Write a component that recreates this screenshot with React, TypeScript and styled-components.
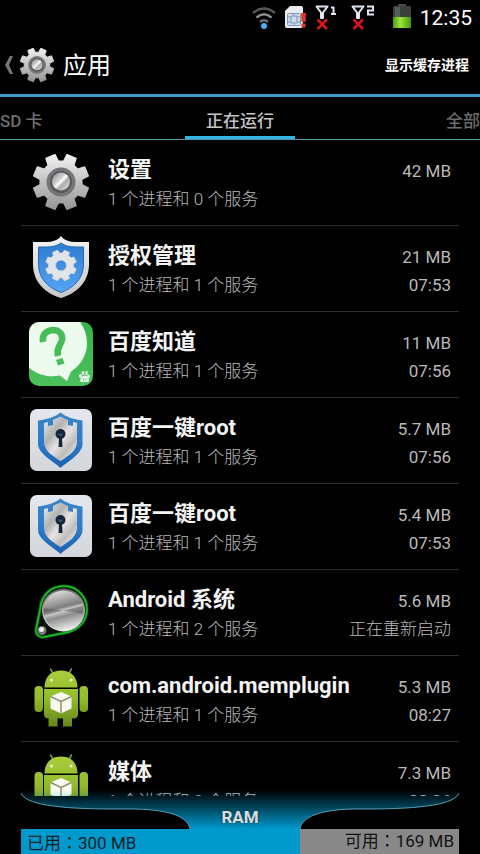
import React, { useId, useState } from "react";
import styled, { createGlobalStyle, css } from "styled-components";

const GlobalStyle = createGlobalStyle`
  *, *::before, *::after { box-sizing: border-box; }
  body {
    margin: 0;
    background: #000;
    color: #fff;
    font-family: Roboto, "Noto Sans CJK SC", sans-serif;
  }
  button {
    margin: 0;
    padding: 0;
    border: 0;
    background: none;
    color: inherit;
    font: inherit;
    cursor: pointer;
  }
`;

const Screen = styled.div`
  display: flex;
  flex-direction: column;
  height: 100vh;
  overflow: hidden;
  background: #000;
`;

/* ---------- status bar ---------- */

const StatusBar = styled.div`
  display: flex;
  flex: none;
  justify-content: flex-end;
  align-items: center;
  height: 34px;
  padding-right: 8px;
`;

const Signals = styled.div`
  display: flex;
  align-items: center;
  gap: 8px;
  margin-right: 17px;
`;

const SecondSignal = styled.span`
  display: flex;
  margin-left: 4px;
`;

const Clock = styled.time`
  margin-left: 8px;
  font-size: 21px;
  line-height: 34px;
  padding-top: 2px;
`;

/* ---------- action bar ---------- */

const ActionBar = styled.header`
  display: flex;
  flex: none;
  justify-content: space-between;
  align-items: center;
  height: 63px;
  padding: 2px 11px 0 4px;
  border-bottom: 3px solid #3e98cc;
`;

const UpButton = styled.button`
  display: flex;
  align-items: center;
  gap: 4px;
`;

const Title = styled.h1`
  margin: 0 0 0 3px;
  padding-top: 2px;
  font-size: 24px;
  font-weight: 400;
  line-height: 32px;
`;

const ActionButton = styled.button`
  font-size: 14px;
  font-weight: 700;
  line-height: 32px;
`;

/* ---------- tabs ---------- */

const Tabs = styled.div`
  display: grid;
  flex: none;
  grid-template-columns: 1fr 110px 1fr;
  height: 43px;
  border-bottom: 1px solid #479aa8;
`;

const Tab = styled.button<{ $side: "left" | "center" | "right" }>`
  border-bottom: 3px solid transparent;
  color: #6d6d6d;
  font-size: 17px;
  font-weight: 500;
  line-height: 30px;
  padding-top: 9px;
  text-align: ${(p) => p.$side};
  &[aria-selected="true"] {
    border-color: #33b5e5;
    color: #c4c4c4;
  }
`;

/* ---------- process list ---------- */

const List = styled.ul`
  flex: 1;
  min-height: 0;
  margin: 0 21px;
  padding: 0;
  overflow: hidden;
  list-style: none;
`;

const Row = styled.li`
  display: flex;
  height: 86px;
  padding: 0 8px;
  border-bottom: 1px solid #2c2c2c;
`;

const IconSlot = styled.div`
  flex: none;
  width: 64px;
  padding-top: 10px;
`;

const Texts = styled.div`
  flex: 1;
  min-width: 0;
  margin-left: 15px;
  padding-top: 15px;
`;

const Name = styled.div`
  color: #f4f4f4;
  font-size: 22px;
  font-weight: 700;
  line-height: 30px;
  white-space: nowrap;
`;

const light = css`
  color: #bababa;
  font-size: 17px;
  line-height: 28px;
  white-space: nowrap;
`;

const Detail = styled.div`
  ${light}
  font-weight: 300;
`;

const Stats = styled.div`
  ${light}
  flex: none;
  padding-top: 17px;
  text-align: right;
`;

const State = styled.div<{ $message: boolean }>`
  font-weight: ${(p) => (p.$message ? 300 : 400)};
`;

/* ---------- memory panel ---------- */

const MemoryPanel = styled.footer`
  position: relative;
  flex: none;
  margin: -6px 21px 0;
`;

const Handle = styled.div`
  display: grid;
  height: 39px;
  background: linear-gradient(rgba(0, 153, 204, 0), #0099cc);
`;

const Curve = styled.svg`
  grid-area: 1 / 1;
  width: 100%;
  height: 39px;
`;

const HandleLabel = styled.h2`
  grid-area: 1 / 1;
  margin: 0;
  padding-top: 12px;
  color: #dcdcdc;
  font-size: 17px;
  font-weight: 700;
  line-height: 30px;
  text-align: center;
  text-shadow: 0 0 3px #00384c;
`;

const MemoryBar = styled.div`
  display: flex;
  height: 25px;
  color: #0c1e26;
  font-family: Roboto, "Noto Sans CJK TC", sans-serif;
  font-size: 17px;
  line-height: 28px;
  white-space: nowrap;
`;

const Used = styled.div`
  flex: 300;
  padding-left: 6px;
  background: #0099cc;
`;

const Free = styled.div`
  flex: 170;
  padding-right: 5px;
  background: #888;
  color: #111;
  line-height: 24px;
  text-align: right;
`;

/* ---------- drawings ---------- */

function gearPath(cx: number, cy: number, outer: number, inner: number) {
  const points: string[] = [];
  for (let i = 0; i < 8; i++) {
    const mid = 22.5 + i * 45;
    for (const [offset, r] of [[-15, inner], [-10, outer], [10, outer], [15, inner]]) {
      const a = ((mid + offset) * Math.PI) / 180;
      points.push(`${(cx + r * Math.sin(a)).toFixed(2)} ${(cy - r * Math.cos(a)).toFixed(2)}`);
    }
  }
  return `M${points.join("L")}Z`;
}

function SettingsIcon({ size = 64, box = "0 0 64 64" }: { size?: number; box?: string }) {
  const id = useId();
  return (
    <svg width={size} height={size} viewBox={box} aria-hidden="true">
      <defs>
        <linearGradient id={`${id}a`} x1="0" y1="0" x2="0" y2="1">
          <stop offset="0" stopColor="#f2f2f2" />
          <stop offset="1" stopColor="#949494" />
        </linearGradient>
        <linearGradient id={`${id}b`} x1="0" y1="0" x2="1" y2="1">
          <stop offset="0" stopColor="#8d8d8d" />
          <stop offset="0.4" stopColor="#d0d0d0" />
          <stop offset="0.5" stopColor="#fff" />
          <stop offset="0.62" stopColor="#aaa" />
          <stop offset="1" stopColor="#eee" />
        </linearGradient>
      </defs>
      <path d={gearPath(32, 32, 28, 21)} fill={`url(#${id}a)`} stroke={`url(#${id}a)`} strokeWidth="1.5" strokeLinejoin="round" />
      <circle cx="32" cy="32" r="14.5" fill="#747679" />
      <circle cx="32" cy="32" r="11" fill="#56585b" />
      <circle cx="32" cy="31.5" r="9" fill={`url(#${id}b)`} />
    </svg>
  );
}

function PermissionIcon() {
  return (
    <svg width="64" height="64" viewBox="0 0 64 64" aria-hidden="true">
      <defs>
        <linearGradient id="permRim" x1="0" y1="0" x2="0" y2="1">
          <stop offset="0" stopColor="#f4f4f4" />
          <stop offset="1" stopColor="#c4c6c8" />
        </linearGradient>
        <linearGradient id="permFill" x1="0" y1="0" x2="0" y2="1">
          <stop offset="0" stopColor="#2f7bd0" />
          <stop offset="1" stopColor="#55a5f5" />
        </linearGradient>
      </defs>
      <path d="M32 0C35 4 40 6 48 6L60 6V28C60 45 49 57 32 62C15 57 4 45 4 28V6L16 6C24 6 29 4 32 0Z" fill="url(#permRim)" />
      <path d="M32 7C36 10 41 11 47 11H54.500V28C54.500 42 46 51 32 56.500C18 51 9.500 42 9.500 28V11H17C23 11 28 10 32 7Z" fill="url(#permFill)" stroke="#2868b0" strokeWidth="1" />
      <path fillRule="evenodd" d={`${gearPath(32, 29.500, 15.5, 12.500)}M26.500 29.500a5.500 5.500 0 1 0 11 0a5.500 5.500 0 1 0 -11 0Z`} fill="#e2e5e8" stroke="#cfd6dc" strokeWidth="1" strokeLinejoin="round" />
    </svg>
  );
}

function AnswersIcon() {
  return (
    <svg width="64" height="64" viewBox="0 0 64 64" aria-hidden="true">
      <defs>
        <linearGradient id="ansBg" x1="0" y1="0" x2="0" y2="1">
          <stop offset="0" stopColor="#36b34a" />
          <stop offset="1" stopColor="#4cc05c" />
        </linearGradient>
        <clipPath id="ansClip">
          <rect width="64" height="64" rx="10" />
        </clipPath>
      </defs>
      <g clipPath="url(#ansClip)">
        <rect width="64" height="64" fill="url(#ansBg)" />
        <path d="M-6 -6H46C54 2 58 11 58 21C58 33 52 43 42 49.500L38 59L31 53.500C17 56 5 52 -6 40Z" fill="#ecfbee" />
      </g>
      <path d="M14 20C12.500 12 18 8.500 24 8C31 8 34 13 33 18C31.500 24 27 25 29 34" fill="none" stroke="#47bd58" strokeWidth="6.500" />
      <path d="M27 38L33.500 36L35.500 41.500L29 43.500Z" fill="#47bd58" />
      <g fill="#e8f9ea">
        <ellipse cx="51.500" cy="54" rx="1.500" ry="2" />
        <ellipse cx="54" cy="51" rx="1.400" ry="2" />
        <ellipse cx="57.500" cy="51" rx="1.400" ry="2" />
        <ellipse cx="59.500" cy="54.500" rx="1.400" ry="2" />
        <path d="M55.500 53.500C58 53.500 58.500 56 60 57.500C60.500 60.500 58 60 55.500 60C53 60 51 60.500 51 58C52 56 53.500 53.500 55.500 53.500Z" />
      </g>
      <path d="M54.500 56.500V58.500M57 56.500V58.500" stroke="#4cc05c" strokeWidth="1" />
    </svg>
  );
}

function RootIcon() {
  const id = useId();
  return (
    <svg width="64" height="64" viewBox="0 0 64 64" aria-hidden="true">
      <defs>
        <linearGradient id={`${id}t`} x1="0" y1="0" x2="0" y2="1">
          <stop offset="0" stopColor="#e4e8ee" />
          <stop offset="1" stopColor="#d3d7dc" />
        </linearGradient>
        <linearGradient id={`${id}b`} x1="0" y1="0" x2="0" y2="1">
          <stop offset="0" stopColor="#3b86c4" />
          <stop offset="0.5" stopColor="#2f7ccd" />
          <stop offset="1" stopColor="#1b62b0" />
        </linearGradient>
        <linearGradient id={`${id}s`} x1="0" y1="0" x2="0.9" y2="1">
          <stop offset="0" stopColor="#f0f0f0" />
          <stop offset="0.35" stopColor="#b2b2b2" />
          <stop offset="0.55" stopColor="#e6e4e2" />
          <stop offset="0.75" stopColor="#bfbdbc" />
          <stop offset="1" stopColor="#eee" />
        </linearGradient>
      </defs>
      <rect x="1" y="1" width="62" height="62" rx="7" fill={`url(#${id}t)`} />
      <path d="M31.500 4.500C37 9 44 11 53.500 12.500V36C53.500 42 48 47 43 51C38 55 34 57 31.500 60C29 57 25 55 20 51C15 47 9 42 9 36V12.500C19 11 26 9 31.500 4.500Z" fill={`url(#${id}b)`} />
      <path d="M15 15L19 14V18L24 17V12L31.500 8.500L39 12V17L44 18V14L48 15V34C48 43 38 49 31.500 53C25 49 15 43 15 34Z" fill={`url(#${id}s)`} />
      <circle cx="31.500" cy="26" r="5" fill="#14263a" />
      <path d="M30 29H33L33.500 39H29.500Z" fill="#14263a" />
      <path d="M29.500 25.500Q31.500 29 33.500 25.500" fill="none" stroke="#35638c" strokeWidth="1.500" />
    </svg>
  );
}

function SystemIcon() {
  return (
    <svg width="64" height="64" viewBox="0 0 64 64" aria-hidden="true">
      <defs>
        <linearGradient id="sysRim" x1="0" y1="0" x2="0" y2="1">
          <stop offset="0" stopColor="#666" />
          <stop offset="1" stopColor="#eee" />
        </linearGradient>
        <linearGradient id="sysDisc" x1="0.35" y1="0" x2="0.6" y2="1">
          <stop offset="0" stopColor="#ddd" />
          <stop offset="0.25" stopColor="#a6a6a6" />
          <stop offset="0.42" stopColor="#7d7d7d" />
          <stop offset="0.5" stopColor="#d0d0d0" />
          <stop offset="0.64" stopColor="#8d8d8d" />
          <stop offset="1" stopColor="#f1f1f1" />
        </linearGradient>
      </defs>
      <path d="M11 30C12 15 22 6 35 6C48 6 58 17 58 29C58 41 50 49 40 52L15 57C9 58 5.500 53 7.500 47Z" fill="#081008" stroke="#0b6d12" strokeWidth="3" />
      <path d="M11 30C12 15 22 6 35 6C48 6 58 17 58 29C58 41 50 49 40 52L15 57C9 58 5.500 53 7.500 47Z" fill="none" stroke="#1fb82a" strokeWidth="1.500" />
      <circle cx="34.500" cy="30" r="21.500" fill="url(#sysRim)" />
      <circle cx="34.500" cy="30.500" r="20" fill="url(#sysDisc)" />
      <path d="M34.500 30.500L15 35.500A20 20 0 0 1 14.700 28Z" fill="#555" opacity="0.5" />
      <path d="M34.500 30.500L54 25.500A20 20 0 0 1 54 34Z" fill="#555" opacity="0.5" />
      <circle cx="13" cy="50.500" r="4.500" fill="#777" />
      <circle cx="12.500" cy="49.500" r="2.500" fill="#eee" />
    </svg>
  );
}

function AndroidIcon() {
  const id = useId();
  const fill = `url(#${id}g)`;
  return (
    <svg width="64" height="64" viewBox="0 0 64 64" aria-hidden="true">
      <defs>
        <linearGradient id={`${id}g`} gradientUnits="userSpaceOnUse" x1="0" y1="3" x2="0" y2="61">
          <stop offset="0" stopColor="#a9cf3c" />
          <stop offset="0.5" stopColor="#94bb2c" />
          <stop offset="1" stopColor="#64851b" />
        </linearGradient>
      </defs>
      <path d="M21.500 3L25 9M42.500 3L39 9" stroke="#7f9c30" strokeWidth="1.500" strokeLinecap="round" />
      <path d="M15.500 21.500C15.500 11 22 4.500 32 4.500C42 4.500 48.500 11 48.500 21.500Z" fill={fill} />
      <circle cx="22.500" cy="14" r="1.500" fill="#eef7cf" />
      <circle cx="42" cy="14" r="1.500" fill="#eef7cf" />
      <path d="M15 23H49V48Q49 52.500 44.500 52.500H43V60.500H34V52.500H28.500V60.500H19.500V52.500Q15 52.500 15 48Z" fill={fill} />
      <rect x="5.500" y="20" width="8.500" height="26" rx="4" fill={fill} />
      <rect x="50.500" y="20" width="8.500" height="26" rx="4" fill={fill} />
      <path d="M32 26L42.500 30.500V42.500L32 47.500L21.500 42.500V30.500Z" fill="#f8faf2" />
      <path d="M21.500 30.500L32 35.500L42.500 30.500M32 35.500V47.500" fill="none" stroke="#87966a" strokeWidth="1.500" />
    </svg>
  );
}

function WifiIcon() {
  return (
    <svg width="24" height="26" viewBox="0 0 24 26" fill="none" strokeWidth="2.500" aria-hidden="true">
      <path d="M1 9Q12 0 23 9" stroke="#55585a" />
      <path d="M4.500 13.500Q12 7 19.500 13.500" stroke="#8c8e90" />
      <path d="M8 18Q12 14.500 16 18" stroke="#6a7074" />
      <circle cx="12" cy="22" r="3" fill="#4aaef0" />
    </svg>
  );
}

function SimIcon() {
  return (
    <svg width="23" height="24" viewBox="0 0 23 24" aria-hidden="true">
      <path d="M6 1H17Q19 1 19 3V21Q19 23 17 23H3Q1 23 1 21V6Z" fill="#e9edf2" />
      <rect x="3.500" y="8.500" width="13" height="12" rx="1" fill="#cfdcec" stroke="#7d97ba" />
      <path d="M3.500 12H7M3.500 17H7M13 12H16.500M13 17H16.500M10 8.500V11M10 18V20.500M7 11H13V18H7Z" fill="none" stroke="#7d97ba" />
      <path d="M17 8H22L21.500 17H17.500Z" fill="#e23a20" />
      <rect x="17.500" y="18.500" width="4" height="4" fill="#e23a20" />
    </svg>
  );
}

function NoSignalIcon({ slot }: { slot: 1 | 2 }) {
  return (
    <svg width="24" height="26" viewBox="0 0 24 26" fill="none" aria-hidden="true">
      <path d="M1.500 2.500H12.500L8 8.500V14H6V8.500Z" stroke="#dfe6ef" strokeWidth="2" strokeLinejoin="round" />
      <path d="M2.500 15.500L12 25M12 15.500L2.500 25" stroke="#d9161c" strokeWidth="2.500" />
      {slot === 1 ? (
        <path d="M16 3.500H18.500V10M16 10H21" stroke="#dfe6ef" strokeWidth="2" />
      ) : (
        <path d="M16 2.500H22V6.500H17V10.500H23" stroke="#dfe6ef" strokeWidth="2" />
      )}
    </svg>
  );
}

function BatteryIcon() {
  return (
    <svg width="20" height="26" viewBox="0 0 20 26" aria-hidden="true">
      <defs>
        <linearGradient id="charge" x1="0" y1="0" x2="1" y2="0">
          <stop offset="0" stopColor="#4f9d0e" />
          <stop offset="0.4" stopColor="#9ae63a" />
          <stop offset="1" stopColor="#4b960c" />
        </linearGradient>
      </defs>
      <rect x="6" y="0" width="8" height="4" rx="1" fill="#4b4f4b" />
      <rect x="1" y="2" width="18" height="22" rx="1" fill="#3a403a" />
      <rect x="3" y="3" width="5" height="10" fill="#565d56" />
      <path d="M1 13H19V23Q19 24 18 24H2Q1 24 1 23Z" fill="url(#charge)" />
    </svg>
  );
}

/* ---------- data ---------- */

const processes = [
  { icon: <SettingsIcon />, name: "设置", detail: "1 个进程和 0 个服务", size: "42 MB", time: "" },
  { icon: <PermissionIcon />, name: "授权管理", detail: "1 个进程和 1 个服务", size: "21 MB", time: "07:53" },
  { icon: <AnswersIcon />, name: "百度知道", detail: "1 个进程和 1 个服务", size: "11 MB", time: "07:56" },
  { icon: <RootIcon />, name: "百度一键root", detail: "1 个进程和 1 个服务", size: "5.7 MB", time: "07:56" },
  { icon: <RootIcon />, name: "百度一键root", detail: "1 个进程和 1 个服务", size: "5.4 MB", time: "07:53" },
  { icon: <SystemIcon />, name: "Android 系统", detail: "1 个进程和 2 个服务", size: "5.6 MB", time: "正在重新启动", message: true },
  { icon: <AndroidIcon />, name: "com.android.memplugin", detail: "1 个进程和 1 个服务", size: "5.3 MB", time: "08:27" },
  { icon: <AndroidIcon />, name: "媒体", detail: "1 个进程和 0 个服务", size: "7.3 MB", time: "08:26" },
];

const tabs = [
  { label: "SD 卡", side: "left" },
  { label: "正在运行", side: "center" },
  { label: "全部", side: "right" },
] as const;

export default function App() {
  const [selected, setSelected] = useState(1);
  return (
    <Screen>
      <GlobalStyle />
      <StatusBar>
        <Signals>
          <WifiIcon />
          <SimIcon />
          <NoSignalIcon slot={1} />
          <SecondSignal>
            <NoSignalIcon slot={2} />
          </SecondSignal>
        </Signals>
        <BatteryIcon />
        <Clock>12:35</Clock>
      </StatusBar>

      <ActionBar>
        <UpButton aria-label="返回">
          <svg width="10" height="20" viewBox="0 0 10 20" aria-hidden="true">
            <path d="M9 1H6L1 10L6 19H9L5 10Z" fill="#777" />
          </svg>
          <SettingsIcon size={38} box="1 1 62 62" />
          <Title>应用</Title>
        </UpButton>
        <ActionButton>显示缓存进程</ActionButton>
      </ActionBar>

      <Tabs role="tablist">
        {tabs.map((tab, i) => (
          <Tab key={tab.label} role="tab" aria-selected={i === selected} $side={tab.side} onClick={() => setSelected(i)}>
            {tab.label}
          </Tab>
        ))}
      </Tabs>

      <List>
        {processes.map((p, i) => (
          <Row key={i}>
            <IconSlot>{p.icon}</IconSlot>
            <Texts>
              <Name>{p.name}</Name>
              <Detail>{p.detail}</Detail>
            </Texts>
            <Stats>
              <div>{p.size}</div>
              <State $message={Boolean(p.message)}>{p.time}</State>
            </Stats>
          </Row>
        ))}
      </List>

      <MemoryPanel>
        <Handle>
          <Curve viewBox="0 0 438 39" preserveAspectRatio="none" aria-hidden="true">
            <path d="M0 3C4 14 35 19 92 19H115C150 20 167 27 169 39H0Z" fill="#000" />
            <path d="M438 3C434 14 403 19 346 19H331C298 20 281 27 279 39H438Z" fill="#000" />
            <path d="M0 3C4 14 35 19 92 19H115C150 20 167 27 169 39M438 3C434 14 403 19 346 19H331C298 20 281 27 279 39" fill="none" stroke="#5c9cb2" strokeWidth="1" />
          </Curve>
          <HandleLabel>RAM</HandleLabel>
        </Handle>
        <MemoryBar>
          <Used>已用：300 MB</Used>
          <Free>可用：169 MB</Free>
        </MemoryBar>
      </MemoryPanel>
    </Screen>
  );
}
